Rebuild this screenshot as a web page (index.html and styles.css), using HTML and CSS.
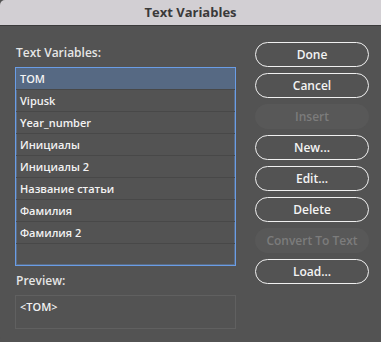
FILE: index.html
```html
<!DOCTYPE html>
<html lang="ru">
<head>
  <meta charset="UTF-8">
  <title>Text Variables</title>
  <link rel="stylesheet" href="styles.css">
</head>
<body>

  <div class="window">
    <header class="titlebar">Text Variables</header>

    <main class="content">
      <section class="left">
        <div class="label first">Text Variables:</div>
        <ul class="var-list">
          <li class="selected">TOM</li>
          <li>Vipusk</li>
          <li>Year_number</li>
          <li>Инициалы</li>
          <li>Инициалы 2</li>
          <li>Название статьи</li>
          <li>Фамилия</li>
          <li>Фамилия 2</li>
          <li class="empty"></li>
        </ul>

        <div class="label">Preview:</div>
        <div class="preview">&lt;TOM&gt;</div>
      </section>

      <section class="buttons">
        <button class="btn">Done</button>
        <button class="btn">Cancel</button>
        <button class="btn disabled">Insert</button>
        <button class="btn">New...</button>
        <button class="btn">Edit...</button>
        <button class="btn">Delete</button>
        <button class="btn disabled">Convert To Text</button>
        <button class="btn">Load...</button>
      </section>
    </main>
  </div>

</body>
</html>
```

FILE: styles.css
```css
html, body {
  margin: 0;
  height: 100%;
}

body {
  font-family: 'Open Sans', 'Noto Sans', sans-serif;
  background: #535353;
  color: #ececec;
}

.window {
  height: 100%;
  display: flex;
  flex-direction: column;
  background: #535353;
  border-radius: 5px 0 0 5px;
  overflow: hidden;
}

.titlebar {
  height: 25px;
  line-height: 25px;
  background: #d2cfd3;
  border-bottom: 1px solid #3b3b3b;
  color: #3a3a3a;
  font-size: 13px;
  font-weight: 700;
  text-align: center;
}

.content {
  display: flex;
  gap: 19px;
  padding: 16px 0 0 15px;
}

/* colonne de gauche */
.left {
  width: 221px;
  display: flex;
  flex-direction: column;
}

.label {
  height: 16px;
  line-height: 16px;
  padding-left: 1px;
  font-size: 12px;
  font-weight: 600;
  color: #e6e6e6;
  margin: 7px 0 6px;
}

.label.first {
  margin-top: 3px;
}

.var-list {
  list-style: none;
  margin: 0;
  padding: 0;
  border: 1px solid #6a9de6;
  box-shadow: inset 0 0 0 1px rgba(106, 157, 230, 0.35);
}

.var-list li {
  height: 21px;
  line-height: 21px;
  padding-left: 4px;
  font-size: 11px;
  font-weight: 600;
  color: #f2f2f2;
  border-bottom: 1px solid #484848;
}

.var-list li:last-child {
  border-bottom: none;
}

.var-list li.selected {
  background: #566983;
}

.preview {
  height: 32px;
  border: 1px solid #606060;
  padding: 3px 4px 0;
  box-sizing: border-box;
  height: 34px;
  font-size: 11px;
  font-weight: 600;
  color: #f2f2f2;
}

/* boutons */
.buttons {
  width: 114px;
  display: flex;
  flex-direction: column;
  gap: 6px;
}

.btn {
  height: 25px;
  padding: 0;
  border: 1.5px solid #f0f0f0;
  border-radius: 13px;
  background: transparent;
  color: #f4f4f4;
  font-family: inherit;
  font-size: 12px;
  font-weight: 600;
}

.btn.disabled {
  border-color: transparent;
  background: #585858;
  color: #7c7c7c;
}
```
